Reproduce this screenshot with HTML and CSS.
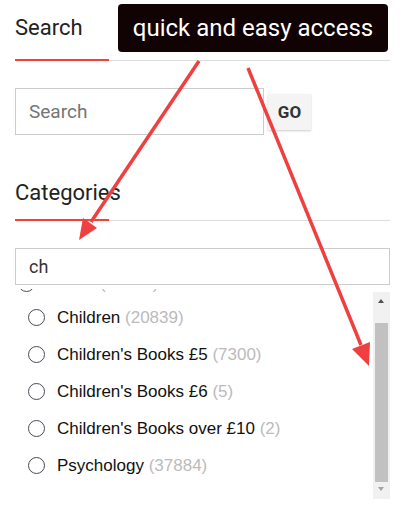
FILE: index.html
```html
<!DOCTYPE html>
<html lang="en">
<head>
  <meta charset="UTF-8">
  <meta name="viewport" content="width=device-width, initial-scale=1.0">
  <title>Search and categories</title>
  <link rel="stylesheet" href="styles.css">
</head>
<body>

  <!-- Search block -->
  <div class="tab-head">
    <span class="tab-title">Search</span>
  </div>
  <form class="search-form">
    <input type="text" class="search-input" placeholder="Search">
    <button type="button" class="go-btn">GO</button>
  </form>

  <!-- Categories block -->
  <div class="tab-head cat-head">
    <span class="tab-title">Categories</span>
  </div>
  <input type="text" class="filter-input" value="ch">

  <div class="cat-box">
    <ul class="cat-list">
      <li class="cat-item parent"><span class="radio"></span>Chess <span class="count">(20591)</span></li>
      <li class="cat-item"><span class="radio"></span>Children <span class="count">(20839)</span></li>
      <li class="cat-item"><span class="radio"></span>Children's Books £5 <span class="count">(7300)</span></li>
      <li class="cat-item"><span class="radio"></span>Children's Books £6 <span class="count">(5)</span></li>
      <li class="cat-item"><span class="radio"></span>Children's Books over £10 <span class="count">(2)</span></li>
      <li class="cat-item"><span class="radio"></span>Psychology <span class="count">(37884)</span></li>
    </ul>
    <div class="scrollbar">
      <span class="arrow up"></span>
      <span class="thumb"></span>
      <span class="arrow down"></span>
    </div>
  </div>

  <!-- annotation -->
  <div class="tip">quick and easy access</div>
  <svg class="arrows" width="419" height="514" viewBox="0 0 419 514">
    <line x1="199" y1="61" x2="91" y2="222" />
    <polygon points="79,240 97,228 83,218" />
    <line x1="248" y1="68" x2="361" y2="345" />
    <polygon points="369,366 370,342 352,349" />
  </svg>

</body>
</html>
```

FILE: styles.css
```css
body {
  margin: 0;
  padding: 0 29px 0 15px;
  font-family: Roboto, "Liberation Sans", sans-serif;
  color: #222;
  background-color: #fff;
  position: relative;
}
/* section headings */
.tab-head {
  padding-top: 15px;
  border-bottom: 1px solid #ddd;
}
.tab-title {
  display: inline-block;
  width: 94px;
  font-size: 22px;
  line-height: 26px;
  padding-bottom: 18px;
  border-bottom: 2px solid #f44336;
  margin-bottom: -1px;
}
.cat-head {
  margin-top: 30px;
}
.cat-head .tab-title {
  padding-bottom: 13px;
}
/* search */
.search-form {
  display: flex;
  align-items: center;
  gap: 4px;
  margin: 27px 0 0;
}
.search-input {
  box-sizing: border-box;
  width: 249px;
  height: 47px;
  border: 1px solid #ccc;
  padding: 0 13px;
  font-family: Roboto, sans-serif;
  font-size: 19px;
  color: #333;
  outline: none;
}
.search-input::placeholder {
  color: #757575;
}
.go-btn {
  width: 43px;
  height: 36px;
  border: none;
  background-color: #f4f4f4;
  box-shadow: 0 1px 2px rgba(0, 0, 0, 0.2);
  font-family: Roboto, sans-serif;
  font-weight: bold;
  font-size: 17px;
  color: #333;
  padding: 0;
}
/* category filter */
.filter-input {
  display: block;
  box-sizing: border-box;
  width: 375px;
  height: 37px;
  margin-top: 27px;
  border: 1px solid #ccc;
  padding: 0 13px;
  font-family: Roboto, sans-serif;
  font-size: 18px;
  color: #333;
  outline: none;
}
.cat-box {
  display: flex;
  height: 210px;
  margin-top: 4px;
  overflow: hidden;
}
.cat-list {
  flex: 1;
  list-style: none;
  margin: -21px 0 0;
  padding: 0;
  font-family: "Liberation Sans", Arial, sans-serif;
  font-size: 17px;
  color: #111;
}
.cat-item {
  display: flex;
  align-items: center;
  height: 37px;
  padding-left: 13px;
  white-space: pre;
}
.cat-item.parent {
  height: 31px;
  padding-left: 3px;
}
.radio {
  box-sizing: border-box;
  width: 17px;
  height: 17px;
  border: 1.3px solid #4a4a55;
  border-radius: 50%;
  margin-right: 12px;
  flex-shrink: 0;
}
.count {
  color: #bbb;
}
/* fake scrollbar */
.scrollbar {
  width: 17px;
  height: 207px;
  margin-top: 3px;
  background-color: #f1f1f1;
  position: relative;
}
.thumb {
  position: absolute;
  left: 2px;
  top: 31px;
  width: 13px;
  height: 159px;
  background-color: #c1c1c1;
}
.arrow {
  position: absolute;
  left: 5px;
  width: 0;
  height: 0;
  border-left: 3.5px solid transparent;
  border-right: 3.5px solid transparent;
}
.arrow.up {
  top: 7px;
  border-bottom: 4px solid #505050;
}
.arrow.down {
  bottom: 8px;
  border-top: 4px solid #a3a3a3;
}
/* annotation */
.tip {
  position: absolute;
  left: 118px;
  top: 4px;
  width: 270px;
  height: 48px;
  line-height: 48px;
  background-color: #110303;
  border-radius: 4px;
  color: #fff;
  font-size: 24px;
  text-align: center;
}
.arrows {
  position: absolute;
  left: 0;
  top: 0;
  pointer-events: none;
}
.arrows line {
  stroke: #ee4040;
  stroke-width: 3.5;
}
.arrows polygon {
  fill: #ee4040;
}
```
